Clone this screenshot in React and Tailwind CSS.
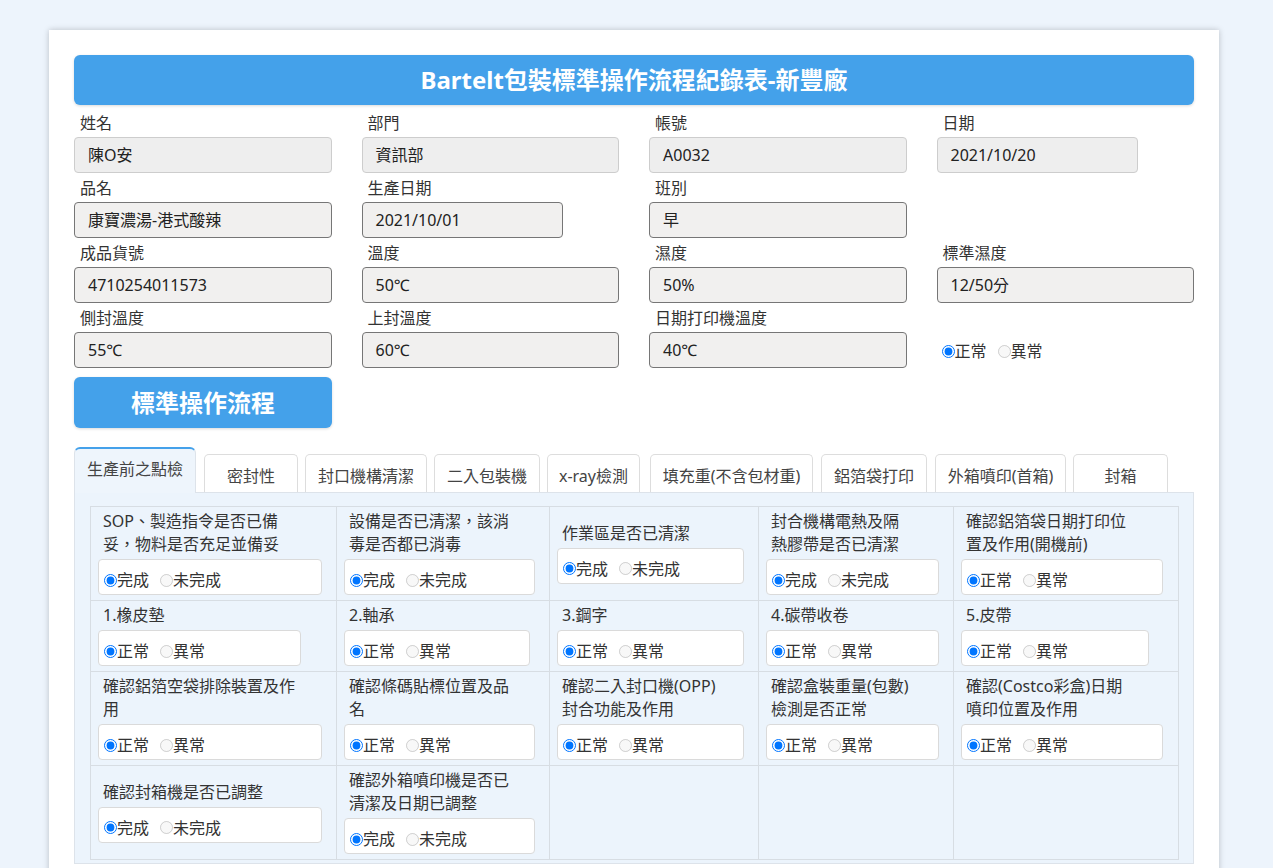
import React from 'react';

// form rows: label / value / readonly / short input
const formRows = [
  [
    { label: '姓名', value: '陳O安', ro: true },
    { label: '部門', value: '資訊部', ro: true },
    { label: '帳號', value: 'A0032', ro: true },
    { label: '日期', value: '2021/10/20', ro: true, short: true },
  ],
  [
    { label: '品名', value: '康寶濃湯-港式酸辣' },
    { label: '生產日期', value: '2021/10/01', short: true },
    { label: '班別', value: '早' },
    null,
  ],
  [
    { label: '成品貨號', value: '4710254011573' },
    { label: '溫度', value: '50℃' },
    { label: '濕度', value: '50%' },
    { label: '標準濕度', value: '12/50分' },
  ],
  [
    { label: '側封溫度', value: '55℃' },
    { label: '上封溫度', value: '60℃' },
    { label: '日期打印機溫度', value: '40℃' },
    { radio: true },
  ],
];

const tabs = [
  { name: '生產前之點檢', cls: 'w-[122px]', active: true },
  { name: '密封性', cls: 'w-[94px] ml-[8px]' },
  { name: '封口機構清潔', cls: 'w-[122px] ml-[7px]' },
  { name: '二入包裝機', cls: 'w-[106px] ml-[7px]' },
  { name: 'x-ray檢測', cls: 'w-[93px] ml-[7px]' },
  { name: '填充重(不含包材重)', cls: 'w-[163px] ml-[10px]' },
  { name: '鋁箔袋打印', cls: 'w-[106px] ml-[8px]' },
  { name: '外箱噴印(首箱)', cls: 'w-[131px] ml-[8px]' },
  { name: '封箱', cls: 'w-[95px] ml-[7px]' },
];

const DONE = ['完成', '未完成'];
const OK = ['正常', '異常'];

const checkRows = [
  [
    { lines: ['SOP、製造指令是否已備', '妥，物料是否充足並備妥'], opts: DONE, w: 'w-[224px]' },
    { lines: ['設備是否已清潔，該消', '毒是否都已消毒'], opts: DONE, w: 'w-[191px]' },
    { lines: ['作業區是否已清潔'], opts: DONE, w: 'w-[187px]' },
    { lines: ['封合機構電熱及隔', '熱膠帶是否已清潔'], opts: DONE, w: 'w-[173px]' },
    { lines: ['確認鋁箔袋日期打印位', '置及作用(開機前)'], opts: OK, w: 'w-[202px]' },
  ],
  [
    { lines: ['1.橡皮墊'], opts: OK, w: 'w-[203px]' },
    { lines: ['2.軸承'], opts: OK, w: 'w-[186px]' },
    { lines: ['3.鋼字'], opts: OK, w: 'w-[187px]' },
    { lines: ['4.碳帶收卷'], opts: OK, w: 'w-[173px]' },
    { lines: ['5.皮帶'], opts: OK, w: 'w-[188px]' },
  ],
  [
    { lines: ['確認鋁箔空袋排除裝置及作', '用'], opts: OK, w: 'w-[224px]' },
    { lines: ['確認條碼貼標位置及品', '名'], opts: OK, w: 'w-[191px]' },
    { lines: ['確認二入封口機(OPP)', '封合功能及作用'], opts: OK, w: 'w-[187px]' },
    { lines: ['確認盒裝重量(包數)', '檢測是否正常'], opts: OK, w: 'w-[173px]' },
    { lines: ['確認(Costco彩盒)日期', '噴印位置及作用'], opts: OK, w: 'w-[202px]' },
  ],
  [
    { lines: ['確認封箱機是否已調整'], opts: DONE, w: 'w-[224px]' },
    { lines: ['確認外箱噴印機是否已', '清潔及日期已調整'], opts: DONE, w: 'w-[191px]' },
    null,
    null,
    null,
  ],
];

function RadioPair({ name, opts }) {
  return (
    <div className="flex items-center text-[16px] leading-[20px] text-[#333]">
      <label className="flex items-center">
        <input type="radio" name={name} defaultChecked className="m-0 w-[13px] h-[13px]" />
        <span>{opts[0]}</span>
      </label>
      <label className="flex items-center ml-[11px]">
        <input type="radio" name={name} disabled className="m-0 w-[13px] h-[13px]" />
        <span>{opts[1]}</span>
      </label>
    </div>
  );
}

function Field({ f, idx }) {
  if (!f) return <div />;
  if (f.radio) {
    return (
      <div className="pt-[24px] mb-[5px]">
        <div className="h-[36px] flex items-center pl-[5px] pt-[2px]">
          <RadioPair name={`form-${idx}`} opts={OK} />
        </div>
      </div>
    );
  }
  return (
    <div className="mb-[5px]">
      <div className="h-[24px] leading-[20px] pl-[6px] text-[16px] text-[#333]">{f.label}</div>
      <div
        className={`h-[36px] rounded-[4px] border flex items-center pl-[13px] text-[16px] text-[#222] ${
          f.ro ? 'border-[#cdcdcd] bg-[#eeeeee]' : 'border-[#767676] bg-[#f1f0ef]'
        } ${f.short ? 'w-[201px]' : 'w-full'}`}
      >
        {f.value}
      </div>
    </div>
  );
}

export default function App() {
  return (
    <div className="min-h-screen bg-[#edf4fc] pt-[30px] font-['Noto_Sans','Noto_Sans_CJK_TC',sans-serif]">
      <div className="ml-[49px] w-[1170px] bg-white shadow-[0_0_6px_rgba(0,0,0,0.22)] px-[25px] pt-[25px] pb-[20px]">
        {/* header */}
        <div className="h-[50px] rounded-[6px] bg-[#44a1ea] shadow-[0_1px_3px_rgba(0,0,0,0.15)] flex items-center justify-center text-white text-[24px] font-bold">
          Bartelt包裝標準操作流程紀錄表-新豐廠
        </div>

        {/* basic info */}
        <div className="mt-[8px] grid grid-cols-4 gap-x-[30px]">
          {formRows.flat().map((f, i) => (
            <Field key={i} f={f} idx={i} />
          ))}
        </div>

        <div className="mt-[4px] w-[258px] h-[51px] rounded-[6px] bg-[#44a1ea] shadow-[0_1px_3px_rgba(0,0,0,0.15)] flex items-center justify-center text-white text-[24px] font-bold">
          標準操作流程
        </div>

        {/* tabs */}
        <div className="mt-[19px] flex items-end">
          {tabs.map((t) =>
            t.active ? (
              <div
                key={t.name}
                className={`${t.cls} h-[46px] rounded-t-[6px] border border-[#dde3ea] border-t-2 border-t-[#44a1ea] border-b-0 bg-[#eef5fc] flex items-center justify-center pb-[4px] text-[16px] text-[#444] relative z-10 -mb-px`}
              >
                {t.name}
              </div>
            ) : (
              <div
                key={t.name}
                className={`${t.cls} h-[38px] rounded-t-[5px] border border-[#dddddd] border-b-0 bg-white flex items-center justify-center pt-[5px] text-[16px] text-[#444]`}
              >
                {t.name}
              </div>
            )
          )}
        </div>

        {/* tab panel */}
        <div className="border border-[#dde3ea] bg-[#ecf4fc] pl-[15px] pr-[15px] pt-[13px] pb-[3px]">
          <table className="border-collapse w-[1088px] table-fixed">
            <colgroup>
              <col className="w-[246px]" />
              <col className="w-[213px]" />
              <col className="w-[209px]" />
              <col className="w-[195px]" />
              <col className="w-[225px]" />
            </colgroup>
            <tbody>
              {checkRows.map((row, r) => (
                <tr key={r}>
                  {row.map((c, ci) => (
                    <td key={ci} className="border border-[#d7dde3] align-middle pl-[7px] pr-[15px] pt-[3px] pb-[5px]">
                      {c && (
                        <div>
                          <div className="pl-[5px] text-[16px] leading-[23px] text-[#333]">
                            {c.lines.map((l, li) => (
                              <div key={li} className="whitespace-nowrap">{l}</div>
                            ))}
                          </div>
                          <div className={`${c.w} mt-[3px] h-[36px] bg-white border border-[#dadada] rounded-[4px] flex items-center pl-[5px] pt-[6px]`}>
                            <RadioPair name={`chk-${r}-${ci}`} opts={c.opts} />
                          </div>
                        </div>
                      )}
                    </td>
                  ))}
                </tr>
              ))}
            </tbody>
          </table>
        </div>
      </div>
    </div>
  );
}
